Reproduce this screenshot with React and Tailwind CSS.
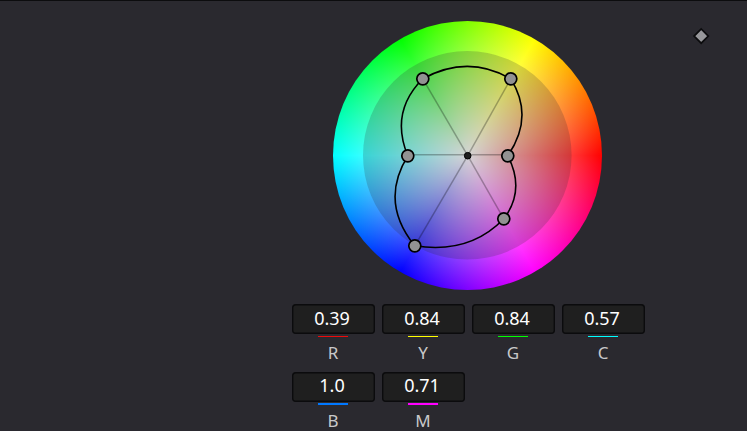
const points = [
  [507.8, 155.8],
  [510.8, 78.8],
  [422.8, 78.8],
  [407.8, 155.8],
  [414.8, 245.8],
  [503.8, 218.8],
];

const rows = [
  [
    { label: "R", value: "0.39", line: "mt-[2px] mb-px h-px bg-[#ee0a0a]", box: "pb-[2px]" },
    { label: "Y", value: "0.84", line: "mt-[2px] mb-px h-px bg-[#ffff00]", box: "pb-[2px]" },
    { label: "G", value: "0.84", line: "mt-[2px] mb-px h-px bg-[#00ff00]", box: "pb-[2px]" },
    { label: "C", value: "0.57", line: "mt-[2px] mb-px h-px bg-[#00ffff]", box: "pb-[2px]" },
  ],
  [
    { label: "B", value: "1.0", line: "mt-px mb-px h-[2px] bg-[#0078ff]", box: "pb-[4px]" },
    { label: "M", value: "0.71", line: "mt-px mb-px h-[2px] bg-[#ff00ff]", box: "pb-[4px]" },
  ],
];

function Wheel() {
  return (
    <div className="relative h-[268px] w-[268px]">
      <div className="h-[268.5px] w-[268.5px] rounded-full bg-[radial-gradient(circle_closest-side,#fff,rgba(255,255,255,0)),conic-gradient(from_90deg,#f00,#f0f,#00f,#0ff,#0f0,#ff0,#f00)]" />
      <svg className="absolute inset-0" width="268" height="268" viewBox="333 21 268 268" fill="none">
        <circle cx="467.3" cy="155.3" r="104.3" fill="#2a292f" fillOpacity="0.2" />
        {points.map(([x, y]) => (
          <line key={`${x},${y}`} x1="467.7" y1={y === 155.8 ? 154.7 : 155.7} x2={x} y2={y === 155.8 ? 154.7 : y} stroke="#000" strokeOpacity="0.28" strokeWidth="1.5" />
        ))}
        <path
          d="M507.8 155.8Q534.6 117 510.8 78.8Q467.7 54 422.8 78.8Q389.6 112 407.8 155.8Q379.2 202 414.8 245.8Q469.5 254.5 503.8 218.8Q525.6 190 507.8 155.8Z"
          stroke="#000"
          strokeWidth="1.6"
        />
        {points.map(([x, y]) => (
          <circle key={`${x},${y}`} cx={x} cy={y} r="6" fill="#929292" stroke="#000" strokeWidth="1.7" />
        ))}
        <circle cx="467.7" cy="155.7" r="3.3" fill="#1f1f1f" stroke="#000" />
      </svg>
    </div>
  );
}

function Field({ label, value, line, box }) {
  return (
    <div className="flex w-[83px] flex-col">
      <div className={`flex h-[30px] w-full shrink-0 items-center justify-center rounded-[4px] bg-[#1f1f1f] pr-[3px] text-[18px] leading-[26px] text-white shadow-[inset_0_0_0_1.4px_#0b0b0d] ${box}`}>
        {value}
      </div>
      <div className={`ml-[26px] w-[30px] shrink-0 ${line}`} />
      <div className="h-[26px] shrink-0 pt-[2px] pr-px text-center text-[17px] leading-[26px] text-[#c8c8ca]">{label}</div>
    </div>
  );
}

export default function App() {
  return (
    <div className="flex h-[431px] w-[747px] flex-col overflow-hidden border-t border-[#0c0c0e] bg-[#2a292f] font-['Noto_Sans',sans-serif]">
      <div className="flex shrink-0 items-start pt-[20px] pl-[333px]">
        <Wheel />
        <svg className="mt-[6px] ml-[91px]" width="18" height="18" viewBox="0 0 18 18">
          <path d="M9.2 2L16.3 9.1L9.2 16.2L2.1 9.1Z" fill="#97979b" stroke="#0b0b0d" strokeWidth="1.7" />
        </svg>
      </div>
      <div className="flex flex-col pt-[15px] pl-[292px]">
        {rows.map((row, i) => (
          <div key={i} className="flex h-[68px] shrink-0 gap-[7px]">
            {row.map((f) => (
              <Field key={f.label} {...f} />
            ))}
          </div>
        ))}
      </div>
    </div>
  );
}
